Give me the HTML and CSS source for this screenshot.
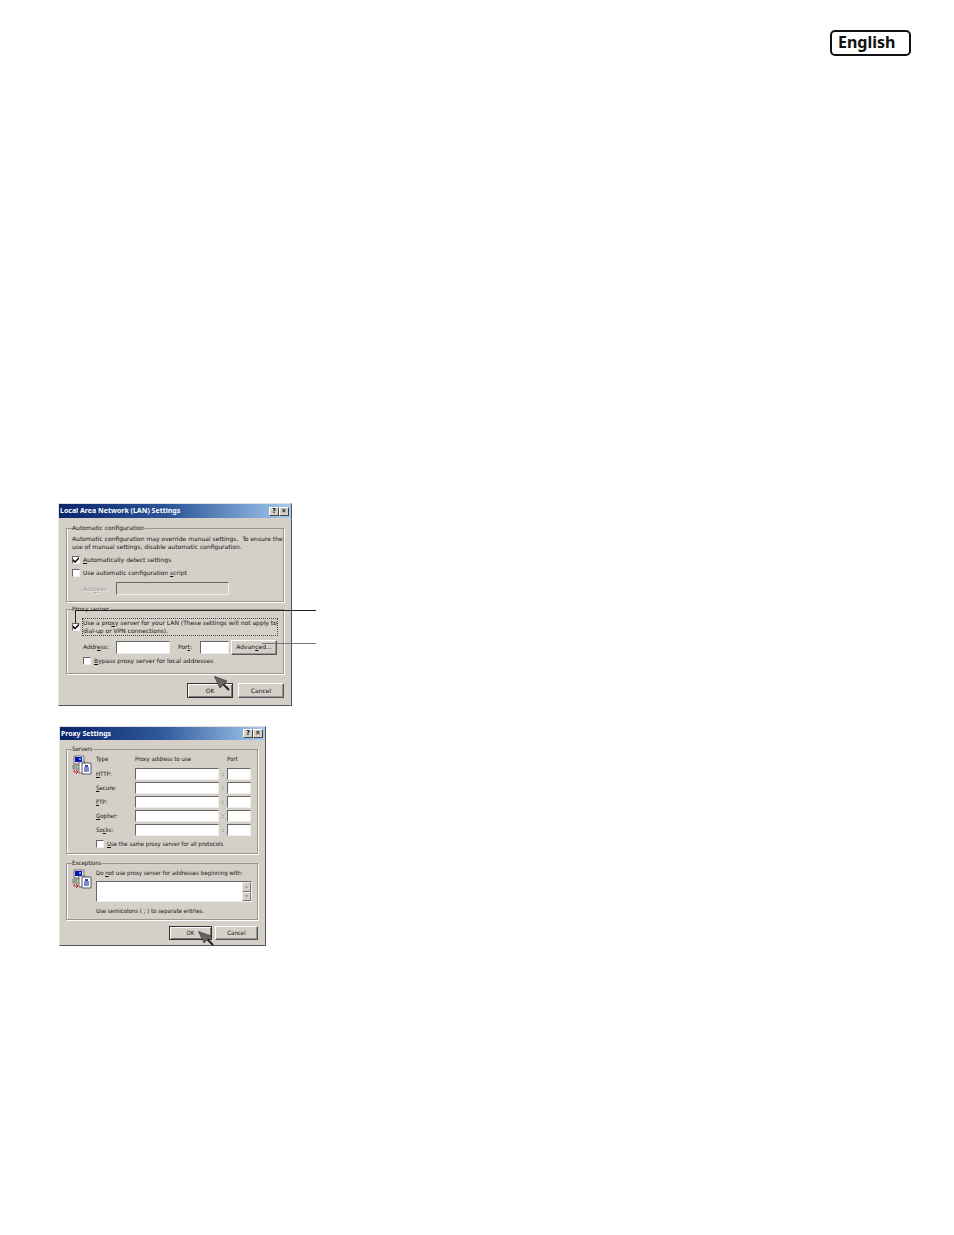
FILE: index.html
```html
<!DOCTYPE html>
<html lang="en">
<head>
    <meta charset="UTF-8">
    <meta name="viewport" content="width=device-width, initial-scale=1.0">
    <title>Proxy Settings</title>
    <link rel="stylesheet" href="styles.css">
</head>
<body>
    <!-- shared drawings -->
    <svg class="defs" aria-hidden="true">
        <symbol id="pointer" viewBox="0 0 16 15">
            <path d="M8 7 L15 14" stroke="#222" stroke-width="2"/>
            <path d="M0.500 0.500 L13 5 L6 12 Z" fill="#666" stroke="#333" stroke-width="0.700"/>
        </symbol>
        <symbol id="servers" viewBox="0 0 20 20">
            <path d="M2 1h10v8H2z" fill="#e4e4dc" stroke="#777" stroke-width="1"/>
            <path d="M3 2h7v5H3z" fill="#0a12b8"/>
            <path d="M7 3h2v2H7z" fill="#58a8f0"/>
            <path d="M1 10h8v4H1z" fill="#c4c8c0" stroke="#777" stroke-width="1"/>
            <path d="M2 12h3" stroke="#2a9040"/>
            <path d="M2 15v2h4M4 15l2 2-2 2" fill="none" stroke="#d82020" stroke-width="1"/>
            <path d="M7 7h6v11H7z" fill="#fff" stroke="#666" stroke-width="1"/>
            <path d="M10 8h9v11h-9z" fill="#fff" stroke="#556" stroke-width="1"/>
            <path d="M12 12h5v5h-5z" fill="#8088c8"/>
            <path d="M13 10h3v2h-3z" fill="#404890"/>
        </symbol>
    </svg>

    <header class="page-header">
        <span class="language">English</span>
    </header>

    <main>
        <section class="dialog lan">
            <div class="titlebar">
                <h2>Local Area Network (LAN) Settings</h2>
                <button class="tool" type="button">?</button>
                <button class="tool" type="button">✕</button>
            </div>
            <form>
                <fieldset>
                    <legend>Automatic configuration</legend>
                    <p>Automatic configuration may override manual settings.&nbsp; To ensure the<br>use of manual settings, disable automatic configuration.</p>
                    <label class="check"><input type="checkbox" checked><span><u>A</u>utomatically detect settings</span></label>
                    <label class="check"><input type="checkbox"><span>Use automatic configuration <u>s</u>cript</span></label>
                    <div class="row script-row">
                        <label class="disabled" for="script">Add<u>r</u>ess</label>
                        <input class="box" type="text" id="script" disabled>
                    </div>
                </fieldset>
                <fieldset class="proxy">
                    <legend>Proxy server</legend>
                    <label class="check use-proxy"><input type="checkbox" checked><span>Use a pro<u>x</u>y server for your LAN (These settings will not apply to<br>dial-up or VPN connections).</span></label>
                    <div class="row">
                        <label for="address">Addr<u>e</u>ss:</label>
                        <input class="box" type="text" id="address">
                        <label class="port-label" for="port">Por<u>t</u>:</label>
                        <input class="box port" type="text" id="port">
                        <button class="btn" type="button">Advan<u>c</u>ed...</button>
                    </div>
                    <label class="check bypass"><input type="checkbox"><span><u>B</u>ypass proxy server for local addresses</span></label>
                </fieldset>
                <div class="buttons">
                    <button class="btn default" type="button">OK</button>
                    <button class="btn" type="button">Cancel</button>
                </div>
            </form>
            <div class="callout callout-check"></div>
            <div class="callout callout-advanced"></div>
            <svg class="pointer" aria-hidden="true"><use href="#pointer"/></svg>
        </section>

        <section class="dialog settings">
            <div class="titlebar">
                <h2>Proxy Settings</h2>
                <button class="tool" type="button">?</button>
                <button class="tool" type="button">✕</button>
            </div>
            <form>
                <fieldset class="with-icon">
                    <legend>Servers</legend>
                    <svg class="icon" aria-hidden="true"><use href="#servers"/></svg>
                    <div class="content">
                        <div class="server head"><span>Type</span><span>Proxy address to use</span><span></span><span>Port</span></div>
                        <div class="server"><label for="http"><u>H</u>TTP:</label><input class="box" type="text" id="http"><span>:</span><input class="box" type="text" aria-label="HTTP port"></div>
                        <div class="server"><label for="secure"><u>S</u>ecure:</label><input class="box" type="text" id="secure"><span>:</span><input class="box" type="text" aria-label="Secure port"></div>
                        <div class="server"><label for="ftp"><u>F</u>TP:</label><input class="box" type="text" id="ftp"><span>:</span><input class="box" type="text" aria-label="FTP port"></div>
                        <div class="server"><label for="gopher"><u>G</u>opher:</label><input class="box" type="text" id="gopher"><span>:</span><input class="box" type="text" aria-label="Gopher port"></div>
                        <div class="server"><label for="socks">So<u>c</u>ks:</label><input class="box" type="text" id="socks"><span>:</span><input class="box" type="text" aria-label="Socks port"></div>
                        <label class="check"><input type="checkbox"><span><u>U</u>se the same proxy server for all protocols</span></label>
                    </div>
                </fieldset>
                <fieldset class="with-icon exceptions">
                    <legend>Exceptions</legend>
                    <svg class="icon" aria-hidden="true"><use href="#servers"/></svg>
                    <div class="content">
                        <label for="except">Do <u>n</u>ot use proxy server for addresses beginning with:</label>
                        <div class="area box">
                            <textarea id="except"></textarea>
                            <div class="scroll">
                                <button class="up" type="button" aria-label="Up"></button>
                                <button class="down" type="button" aria-label="Down"></button>
                            </div>
                        </div>
                        <p>Use semicolons ( ; ) to separate entries.</p>
                    </div>
                </fieldset>
                <div class="buttons">
                    <button class="btn default" type="button">OK</button>
                    <button class="btn" type="button">Cancel</button>
                </div>
            </form>
            <svg class="pointer" aria-hidden="true"><use href="#pointer"/></svg>
        </section>
    </main>
</body>
</html>
```
FILE: styles.css
```css
* { box-sizing: border-box; }
body {
    margin: 0;
    padding: 30px 43px 30px 58px;
    background: #fff;
    color: #111;
    font: 6px/8px "DejaVu Sans", sans-serif;
}
h2, p, fieldset, legend { margin: 0; padding: 0; }
input, button, textarea { margin: 0; padding: 0; font: inherit; color: inherit; border-radius: 0; }
u { text-decoration-thickness: 1px; text-underline-offset: 1px; }
.defs { display: block; width: 0; height: 0; }

.page-header { display: flex; justify-content: flex-end; margin-bottom: 447px; }
.language {
    width: 81px;
    height: 26px;
    padding-left: 6px;
    border: 2px solid #111;
    border-radius: 5px;
    color: #111;
    font: bold 16px/21px "Noto Sans", "Open Sans", sans-serif;
}

.dialog {
    position: relative;
    border: 1px solid #e4e0d8;
    border-right-color: #555;
    border-bottom-color: #555;
    background: #d4d0c8;
}
.lan { width: 234px; margin-bottom: 20px; }
.settings { width: 207px; margin-left: 1px; font: 6px/8px "DejaVu Sans Condensed", "DejaVu Sans", sans-serif; }
.titlebar {
    display: flex;
    align-items: center;
    height: 14px;
    padding: 0 2px 0 1px;
    background: linear-gradient(to right, #0a246a, #2f5a9c 50%, #a6caf0);
}
.titlebar h2 { flex: 1; color: #fff; font: bold 7px/10px "Noto Sans", "DejaVu Sans Condensed", sans-serif; white-space: nowrap; }
.tool {
    width: 10px;
    height: 9px;
    border: 1px solid #fff;
    border-right-color: #444;
    border-bottom-color: #444;
    background: #d4d0c8;
    color: #000;
    font: bold 7px/7px "DejaVu Sans Condensed", "DejaVu Sans", sans-serif;
}
form { padding: 6px 7px 7px; }
fieldset {
    min-width: 0;
    padding: 3px 5px 6px;
    border: 1px solid #9a968e;
    box-shadow: 1px 1px 0 #fff, inset 1px 0 0 #fff;
    white-space: nowrap;
}
legend { padding-right: 1px; line-height: 8px; }
.proxy { margin-top: 3px; padding: 5px 5px 7px; }

.check { display: flex; align-items: center; gap: 3px; height: 10px; margin-top: 3px; }
.check input {
    appearance: none;
    flex: none;
    width: 8px;
    height: 8px;
    border: 1px solid #666;
    border-right-color: #eee;
    border-bottom-color: #eee;
    background: #fff;
}
.check input:checked::before {
    content: "";
    display: block;
    height: 6px;
    background: #000;
    clip-path: polygon(0 35%, 35% 65%, 100% 0, 100% 35%, 35% 100%, 0 70%);
}
p + .check { margin-top: 4px; }
.use-proxy { height: 17px; margin: 0; gap: 2px; }
.use-proxy span { width: 196px; border: 1px dotted #444; line-height: 8px; }
.bypass { margin: 2px 0 0 11px; }

.row { display: flex; align-items: center; height: 14px; margin-top: 5px; padding-left: 11px; }
.row label { width: 33px; }
.box {
    min-width: 0;
    height: 13px;
    border: 1px solid #666;
    border-right-color: #eee;
    border-bottom-color: #eee;
    background: #fff;
}
.row .box { width: 54px; }
.row .port { width: 29px; margin-right: 2px; }
.row .port-label { width: 22px; margin-left: 8px; }
.script-row { margin-top: 4px; height: 13px; }
.row #script { width: 113px; background: #d4d0c8; }
.disabled { color: #999; text-shadow: 1px 1px 0 #eee; }

.btn {
    width: 46px;
    height: 15px;
    border: 1px solid #fff;
    border-right-color: #555;
    border-bottom-color: #555;
    box-shadow: inset -1px -1px 0 #999;
    background: #d4d0c8;
}
.default { border-color: #333; box-shadow: inset 1px 1px 0 #fff, inset -1px -1px 0 #777; }
.buttons { display: flex; justify-content: flex-end; gap: 5px; margin-top: 9px; }

.settings .titlebar { height: 13px; }
.settings form { padding: 5px 7px 5px 6px; }
.with-icon { display: flex; padding: 2px 5px 4px; }
.icon { flex: none; width: 20px; height: 20px; margin-right: 4px; }
.content { flex: 1; min-width: 0; }
.server { display: grid; grid-template-columns: 39px 84px 8px 24px; align-items: center; height: 12px; margin-bottom: 2px; }
.server .box { width: 100%; height: 12px; }
.server span { text-align: left; }
.server > span:nth-child(3) { padding-left: 3px; }
.server.head { height: 8px; margin-bottom: 5px; }
.exceptions { margin-top: 5px; }
.exceptions label { display: block; }
.area { display: flex; height: 21px; margin: 4px 0 5px; }
.area textarea { flex: 1; min-width: 0; border: 0; background: none; resize: none; outline: 0; overflow: hidden; }
.scroll { display: flex; flex-direction: column; width: 9px; }
.scroll button {
    flex: 1;
    border: 1px solid #eee;
    border-right-color: #777;
    border-bottom-color: #777;
    background: #d4d0c8;
}
.scroll button::before { content: ""; display: block; width: 3px; height: 2px; margin: 0 auto; background: #888; }
.up::before { clip-path: polygon(50% 0, 100% 100%, 0 100%); }
.down::before { clip-path: polygon(0 0, 100% 0, 50% 100%); }
.settings .btn { width: 43px; height: 14px; }
.settings .buttons { gap: 3px; margin-top: 6px; }

/* pointers and callout lines lie over the dialogs */
.pointer { position: absolute; width: 16px; height: 15px; }
.lan .pointer { left: 155px; top: 172px; }
.settings .pointer { left: 138px; top: 204px; }
.callout { position: absolute; border-top: 1px solid #222; }
.callout-check { left: 16px; right: -25px; top: 106px; height: 13px; border-left: 1px solid #222; }
.callout-advanced { left: 203px; right: -25px; top: 139px; border-color: #777; }
```
